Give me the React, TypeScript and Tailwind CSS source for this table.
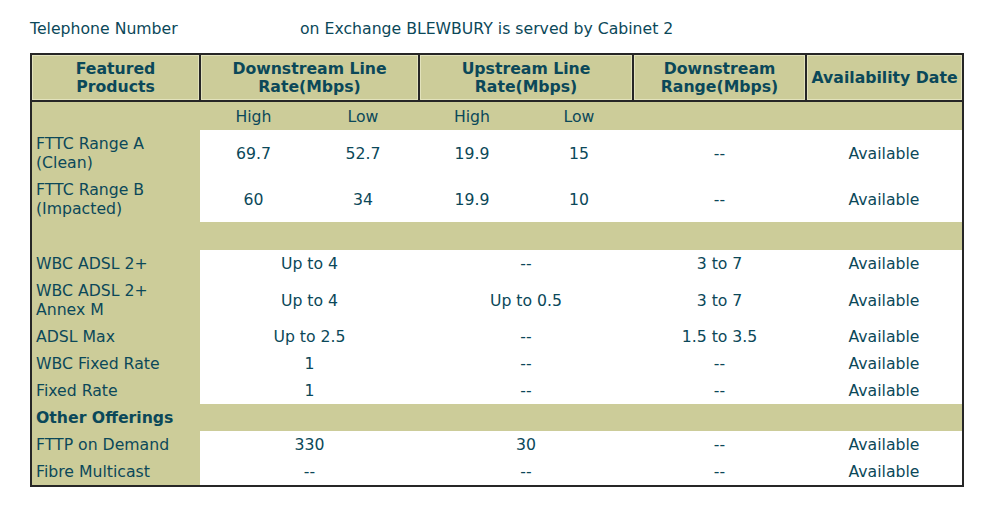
import React from 'react'

type Row = {
  label: React.ReactNode
  cells: { text: string; span?: number }[]
}

const fttc: Row[] = [
  {
    label: (
      <>
        FTTC Range A
        <br />
        (Clean)
      </>
    ),
    cells: [{ text: '69.7' }, { text: '52.7' }, { text: '19.9' }, { text: '15' }, { text: '--' }, { text: 'Available' }],
  },
  {
    label: (
      <>
        FTTC Range B
        <br />
        (Impacted)
      </>
    ),
    cells: [{ text: '60' }, { text: '34' }, { text: '19.9' }, { text: '10' }, { text: '--' }, { text: 'Available' }],
  },
]

const adsl: Row[] = [
  {
    label: 'WBC ADSL 2+',
    cells: [{ text: 'Up to 4', span: 2 }, { text: '--', span: 2 }, { text: '3 to 7' }, { text: 'Available' }],
  },
  {
    label: (
      <>
        WBC ADSL 2+
        <br />
        Annex M
      </>
    ),
    cells: [{ text: 'Up to 4', span: 2 }, { text: 'Up to 0.5', span: 2 }, { text: '3 to 7' }, { text: 'Available' }],
  },
  {
    label: 'ADSL Max',
    cells: [{ text: 'Up to 2.5', span: 2 }, { text: '--', span: 2 }, { text: '1.5 to 3.5' }, { text: 'Available' }],
  },
  {
    label: 'WBC Fixed Rate',
    cells: [{ text: '1', span: 2 }, { text: '--', span: 2 }, { text: '--' }, { text: 'Available' }],
  },
  {
    label: 'Fixed Rate',
    cells: [{ text: '1', span: 2 }, { text: '--', span: 2 }, { text: '--' }, { text: 'Available' }],
  },
]

const other: Row[] = [
  {
    label: 'FTTP on Demand',
    cells: [{ text: '330', span: 2 }, { text: '30', span: 2 }, { text: '--' }, { text: 'Available' }],
  },
  {
    label: 'Fibre Multicast',
    cells: [{ text: '--', span: 2 }, { text: '--', span: 2 }, { text: '--' }, { text: 'Available' }],
  },
]

const th =
  'border-r-2 border-b-2 border-[#262626] bg-[#cccc99] px-1 pt-[5px] pb-[4px] text-center align-middle text-[15.7px] font-bold leading-[18px] shadow-[inset_1px_1px_0_#e2e2bc,inset_-1px_-1px_0_#e2e2bc]'

const DataRows = ({ rows }: { rows: Row[] }) => (
  <>
    {rows.map((r, i) => (
      <tr key={i}>
        <td className="bg-[#cccc99] py-[4px] pl-[4px] text-left">{r.label}</td>
        {r.cells.map((c, j) => (
          <td key={j} colSpan={c.span ?? 1} className="bg-white py-[4px] text-center">
            {c.text}
          </td>
        ))}
      </tr>
    ))}
  </>
)

const App = (): JSX.Element => {
  return (
    <div className="min-h-[509px] bg-white pl-[30px] pt-[18px] text-[15.7px] leading-[19px] text-[#0b4859] [font-family:'DejaVu_Sans',Verdana,sans-serif]">
      <div className="flex h-[20px] items-center">
        <span className="w-[270px]">Telephone Number</span>
        <span>on Exchange BLEWBURY is served by Cabinet 2</span>
      </div>
      <table className="mt-[15px] w-[932px] table-fixed border-collapse border-2 border-[#262626]">
        <colgroup>
          <col className="w-[169px]" />
          <col className="w-[107px]" />
          <col className="w-[112px]" />
          <col className="w-[106px]" />
          <col className="w-[108px]" />
          <col className="w-[173px]" />
          <col className="w-[157px]" />
        </colgroup>
        <thead>
          <tr>
            <th className={th}>
              Featured
              <br />
              Products
            </th>
            <th colSpan={2} className={th}>
              Downstream Line
              <br />
              Rate(Mbps)
            </th>
            <th colSpan={2} className={th}>
              Upstream Line
              <br />
              Rate(Mbps)
            </th>
            <th className={th}>
              Downstream
              <br />
              Range(Mbps)
            </th>
            <th className={th}>Availability Date</th>
          </tr>
        </thead>
        <tbody>
          <tr className="bg-[#cccc99]">
            <td className="py-[4.5px]">&nbsp;</td>
            <td className="py-[4.5px] text-center">High</td>
            <td className="py-[4.5px] text-center">Low</td>
            <td className="py-[4.5px] text-center">High</td>
            <td className="py-[4.5px] text-center">Low</td>
            <td />
            <td />
          </tr>
          <DataRows rows={fttc} />
          <tr className="bg-[#cccc99]">
            <td colSpan={7} className="py-[4.5px]">
              &nbsp;
            </td>
          </tr>
          <DataRows rows={adsl} />
          <tr className="bg-[#cccc99]">
            <td colSpan={7} className="py-[4px] pl-[4px] font-bold">
              Other Offerings
            </td>
          </tr>
          <DataRows rows={other} />
        </tbody>
      </table>
    </div>
  )
}

export default App
